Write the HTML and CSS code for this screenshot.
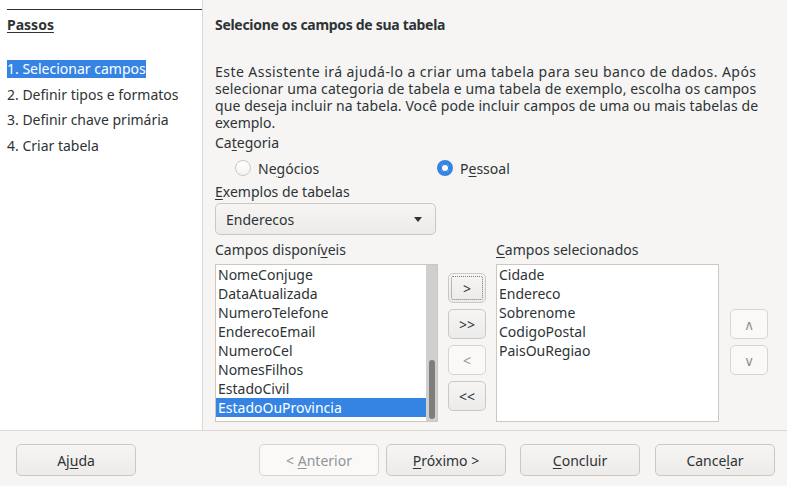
FILE: index.html
```html
<!DOCTYPE html>
<html lang="pt-BR">
<head>
<meta charset="utf-8">
<title>Assistente de tabelas</title>
<link rel="stylesheet" href="styles.css">
</head>
<body>
<div class="window">
  <div class="main">
    <aside class="steps">
      <div class="steps-rule"></div>
      <div class="steps-title">Passos</div>
      <ul class="step-list">
        <li class="step selected">1. Selecionar campos</li>
        <li class="step">2. Definir tipos e formatos</li>
        <li class="step">3. Definir chave primária</li>
        <li class="step">4. Criar tabela</li>
      </ul>
    </aside>
    <section class="content">
      <h1 class="heading">Selecione os campos de sua tabela</h1>
      <p class="intro"><span class="line l1">Este Assistente irá ajudá-lo a criar uma tabela para seu banco de dados. Após</span><span class="line l2">selecionar uma categoria de tabela e uma tabela de exemplo, escolha os campos</span><span class="line l3">que deseja incluir na tabela. Você pode incluir campos de uma ou mais tabelas de</span><span class="line">exemplo.</span></p>
      <div class="label cat-label">Ca<u>t</u>egoria</div>
      <div class="radio-row">
        <label class="radio-item"><span class="radio"></span><span>Ne<u>g</u>ócios</span></label>
        <label class="radio-item"><span class="radio checked"></span><span>P<u>e</u>ssoal</span></label>
      </div>
      <div class="label ex-label"><u>E</u>xemplos de tabelas</div>
      <div class="combo"><span>Enderecos</span><span class="combo-arrow"></span></div>
      <div class="lists">
        <div class="list-col">
          <div class="label list-label">Campos disponí<u>v</u>eis</div>
          <div class="listbox">
            <ul class="items">
              <li>NomeConjuge</li>
              <li>DataAtualizada</li>
              <li>NumeroTelefone</li>
              <li>EnderecoEmail</li>
              <li>NumeroCel</li>
              <li>NomesFilhos</li>
              <li>EstadoCivil</li>
              <li class="sel">EstadoOuProvincia</li>
            </ul>
            <div class="scroll-trough"><div class="scroll-thumb"></div></div>
          </div>
        </div>
        <div class="move-col">
          <button class="btn small focused">&gt;</button>
          <button class="btn small">&gt;&gt;</button>
          <button class="btn small" disabled>&lt;</button>
          <button class="btn small">&lt;&lt;</button>
        </div>
        <div class="list-col">
          <div class="label list-label"><u>C</u>ampos selecionados</div>
          <div class="listbox">
            <ul class="items">
              <li>Cidade</li>
              <li>Endereco</li>
              <li>Sobrenome</li>
              <li>CodigoPostal</li>
              <li>PaisOuRegiao</li>
            </ul>
          </div>
        </div>
        <div class="order-col">
          <button class="btn small" disabled>&#8743;</button>
          <button class="btn small" disabled>&#8744;</button>
        </div>
      </div>
    </section>
  </div>
  <footer class="footer">
    <button class="btn wide">Aj<u>u</u>da</button>
    <div class="nav">
      <button class="btn wide" disabled>&lt; <u>A</u>nterior</button>
      <button class="btn wide next"><u>P</u>róximo &gt;</button>
      <button class="btn wide finish"><u>C</u>oncluir</button>
      <button class="btn wide cancel">Cance<u>l</u>ar</button>
    </div>
  </footer>
</div>
</body>
</html>
```
FILE: styles.css
```css
* { box-sizing: border-box; }
html, body { margin: 0; padding: 0; }
body {
  width: 787px;
  height: 486px;
  overflow: hidden;
  background: #f6f5f4;
  color: #2e3436;
  font-family: "Noto Sans", "Open Sans", sans-serif;
  font-size: 14px;
}
u { text-decoration-thickness: 1px; text-underline-offset: 2px; }
.window { display: flex; flex-direction: column; height: 486px; }
.main { display: flex; height: 431px; border-bottom: 1px solid #dcd8d4; }

.steps {
  width: 203px;
  background: #ffffff;
  border-right: 1px solid #dcd8d4;
  padding: 9px 0 0 7px;
}
.steps-rule { height: 1px; background: #2e2e2e; width: 195px; }
.steps-title {
  margin-top: 6px;
  line-height: 18px;
  font-weight: bold;
  text-decoration: underline;
  text-underline-offset: 2px;
}
.step-list {
  list-style: none;
  margin: 26px 0 0;
  padding: 0;
  display: flex;
  flex-direction: column;
  align-items: flex-start;
  gap: 7.6px;
}
.step { line-height: 18px; height: 18px; }
.step.selected { background: #3584e4; color: #ffffff; }

.content { flex: 1; padding: 16px 0 0 12px; display: flex; flex-direction: column; }
.heading { margin: 0; font-size: 14px; line-height: 18px; font-weight: bold; letter-spacing: -0.3px; }
.intro { margin: 28.5px 0 0; line-height: 17px; white-space: nowrap; }
.line { display: block; }
.l1 { letter-spacing: 0.45px; }
.l2 { letter-spacing: 0.13px; }
.l3 { letter-spacing: 0.09px; }
.label { line-height: 18px; }
.cat-label { margin-top: 3.5px; }
.radio-row { display: grid; grid-template-columns: 202px 202px; margin-top: 6px; padding-left: 20px; height: 20px; }
.radio-item { display: flex; align-items: center; gap: 7px; }
.radio {
  width: 16px; height: 16px; border-radius: 50%;
  border: 1px solid #cdc7c2;
  background: linear-gradient(#ffffff, #f4f3f2);
}
.radio.checked {
  border: 4.5px solid #3584e4;
  background: #ffffff;
  box-shadow: 0 0 0 1px #2a76d2 inset;
}
.ex-label { margin-top: 5px; }
.combo {
  margin-top: 2px;
  width: 221px; height: 32px;
  border: 1px solid #cdc7c2;
  border-radius: 5px;
  background: linear-gradient(#f6f5f4, #edebe9);
  display: flex; align-items: center; justify-content: space-between;
  padding: 0 13px 0 10px;
}
.combo-arrow {
  width: 0; height: 0;
  border-left: 4.5px solid transparent;
  border-right: 4.5px solid transparent;
  border-top: 5px solid #2e3436;
}

.lists { display: flex; margin-top: 6px; }
.list-col { width: 223px; display: flex; flex-direction: column; }
.list-label { margin-bottom: 5px; }
.listbox {
  height: 158px;
  border: 1px solid #cdc7c2;
  background: #ffffff;
  display: flex;
}
.items { list-style: none; margin: 0; padding: 0; flex: 1; }
.items li { height: 19px; line-height: 19px; padding-left: 2px; white-space: nowrap; }
.items li.sel { background: #3584e4; color: #ffffff; }
.scroll-trough { width: 11px; background: #cfcfcd; position: relative; }
.scroll-thumb {
  position: absolute; left: 3px; top: 95px;
  width: 6px; height: 59px; border-radius: 3px;
  background: #7e7e7e;
}

.btn {
  font-family: inherit; font-size: 14px; color: #2e3436;
  border: 1px solid #cdc7c2;
  border-radius: 5px;
  background: linear-gradient(#f6f5f4, #edebe9);
  padding: 0;
}
.btn:disabled { color: #929595; background: #faf9f8; border-color: #d8d4d0; }
.btn.small { width: 38px; height: 30px; }
.btn.focused { outline: 1px dotted #7a7a7a; outline-offset: -4px; }
.move-col { display: flex; flex-direction: column; gap: 6px; padding-top: 32px; margin: 0 10px; }
.order-col { display: flex; flex-direction: column; gap: 6px; padding-top: 68px; margin-left: 11px; }

.footer { flex: 1; display: flex; justify-content: space-between; padding: 13px 12px 0 16px; }
.nav { display: flex; }
.btn.wide { width: 120px; height: 32px; }
.btn.next { margin-left: 7px; }
.btn.finish { margin-left: 14px; }
.btn.cancel { margin-left: 15px; }
```
